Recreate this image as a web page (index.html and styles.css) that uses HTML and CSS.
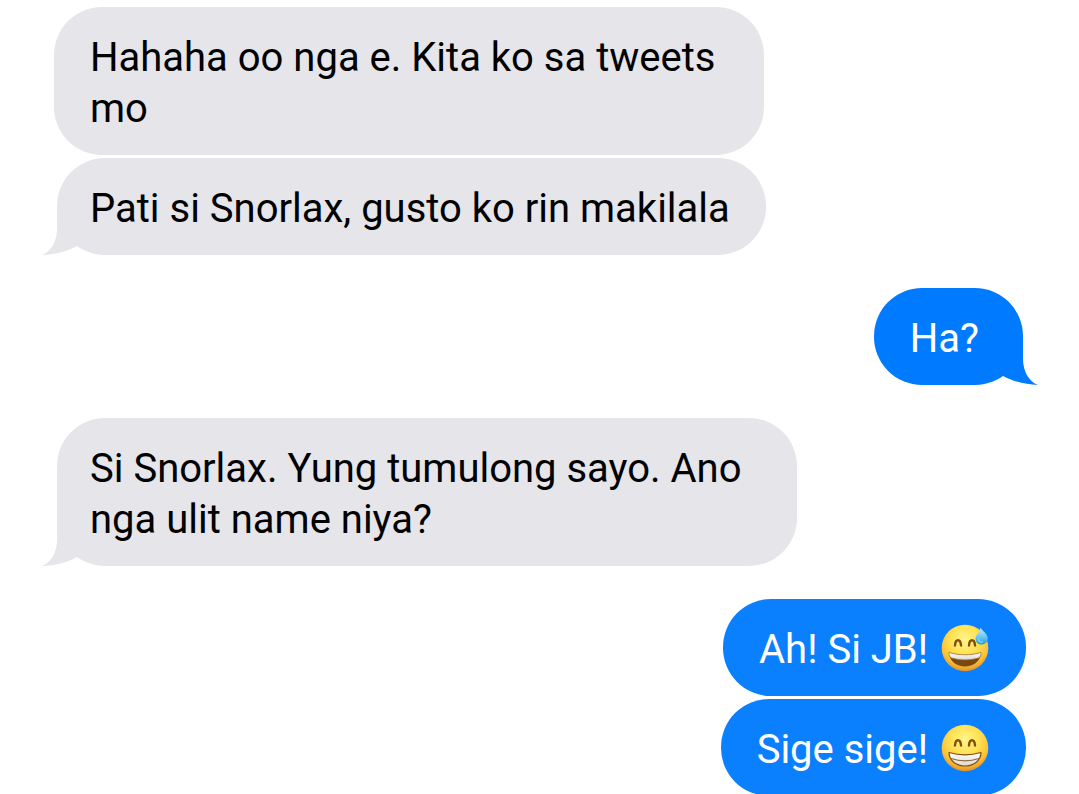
FILE: index.html
```
<!DOCTYPE html>
<html lang="tl">
<head>
    <meta charset="UTF-8">
    <meta name="viewport" content="width=device-width, initial-scale=1">
    <title>Messages</title>
    <link rel="stylesheet" href="styles.css">
</head>
<body>
    <main class="chat">
        <section class="group received">
            <p class="bubble multiline">Hahaha oo nga e. Kita ko sa tweets<br>mo</p>
            <p class="bubble tailed">Pati si Snorlax, gusto ko rin makilala
                <svg class="tail" viewBox="0 0 36 48" aria-hidden="true"><path d="M15 0V22C15 34 9 45 0 48C12 47.500 25 44.500 35 39L36 0Z"/></svg>
            </p>
        </section>

        <section class="group sent">
            <p class="bubble tailed">Ha?
                <svg class="tail" viewBox="0 0 36 48" aria-hidden="true"><path d="M15 0V22C15 34 9 45 0 48C12 47.500 25 44.500 35 39L36 0Z"/></svg>
            </p>
        </section>

        <section class="group received">
            <p class="bubble tailed multiline">Si Snorlax. Yung tumulong sayo. Ano<br>nga ulit name niya?
                <svg class="tail" viewBox="0 0 36 48" aria-hidden="true"><path d="M15 0V22C15 34 9 45 0 48C12 47.500 25 44.500 35 39L36 0Z"/></svg>
            </p>
        </section>

        <section class="group sent recent">
            <p class="bubble">Ah! Si JB!
                <svg class="emoji" viewBox="0 0 48 48" role="img" aria-label="Grinning face with sweat">
                    <defs>
                        <radialGradient id="face" cx="50%" cy="32%" r="68%">
                            <stop offset="0" stop-color="#fff58c"/>
                            <stop offset="0.45" stop-color="#ffe253"/>
                            <stop offset="0.8" stop-color="#fbbf34"/>
                            <stop offset="1" stop-color="#e0902a"/>
                        </radialGradient>
                        <linearGradient id="teeth" x1="0" y1="0" x2="0" y2="1">
                            <stop offset="0" stop-color="#ffffff"/>
                            <stop offset="1" stop-color="#ddd8cf"/>
                        </linearGradient>
                        <linearGradient id="drop" x1="0" y1="0" x2="0" y2="1">
                            <stop offset="0" stop-color="#c5efff"/>
                            <stop offset="0.6" stop-color="#62c3ef"/>
                            <stop offset="1" stop-color="#2695d6"/>
                        </linearGradient>
                    </defs>
                    <circle cx="24" cy="24" r="23.300" fill="url(#face)"/>
                    <path d="M14 21.500C14.500 14.500 19.500 14.500 20 21.500M28 21.500C28.500 14.500 33.500 14.500 34 21.500" fill="none" stroke="#81500f" stroke-width="2.400" stroke-linecap="round"/>
                    <path d="M8 29C18 31.500 30 31.500 40 29C39.500 37.500 32 42.500 24 42.500S8.500 37.500 8 29Z" fill="#7b4710"/>
                    <path d="M8 28.500C18 31.500 30 31.500 40 28.500C40.500 31 39 33.500 37.500 34C29 36.500 19 36.500 10.500 34C9 33.500 7.500 31 8 28.500Z" fill="url(#teeth)" stroke="#9b6826" stroke-width="0.700"/>
                    <path d="M39.500 3.500C39 9 34 10.500 34.500 15.500C35 19.500 38 21 41 20.500C45 20 47.500 17 46.500 13C45.500 9 41.500 7 39.500 3.500Z" fill="url(#drop)"/>
                    <path d="M37.500 15C37.500 17.500 39.500 18.500 41.500 18" fill="none" stroke="#8fdcff" stroke-width="1.200" stroke-linecap="round"/>
                </svg>
            </p>
            <p class="bubble">Sige sige!
                <svg class="emoji" viewBox="0 0 48 48" role="img" aria-label="Beaming face with smiling eyes">
                    <circle cx="24" cy="24" r="23.300" fill="url(#face)"/>
                    <path d="M14 21.500C14.500 14.500 19.500 14.500 20 21.500M28 21.500C28.500 14.500 33.500 14.500 34 21.500" fill="none" stroke="#81500f" stroke-width="2.400" stroke-linecap="round"/>
                    <path d="M8 28.500C18 31.500 30 31.500 40 28.500C40 37 32 42 24 42S8 37 8 28.500Z" fill="url(#teeth)" stroke="#81500f" stroke-width="1.200" stroke-linejoin="round"/>
                    <path d="M10 34.500C19 37.500 29 37.500 38 34.500" fill="none" stroke="#8c6844" stroke-width="1.100"/>
                </svg>
            </p>
        </section>
    </main>
</body>
</html>
```
FILE: styles.css
```
* {
    box-sizing: border-box;
}

body {
    margin: 0;
    background: #fff;
    color: #000;
    font-family: Roboto, "Liberation Sans", sans-serif;
    font-size: 40px;
    line-height: 51px;
    overflow: hidden;
}

.chat {
    display: flex;
    flex-direction: column;
    gap: 33px;
    padding: 7px 53px 0 54px;
}

.group {
    display: flex;
    flex-direction: column;
    gap: 3px;
}

.received {
    --bubble: #e5e5ea;
    align-items: flex-start;
}

.sent {
    --bubble: #007aff;
    align-items: flex-end;
    color: #fff;
}

.recent {
    --bubble: #0b80ff;
}

.bubble {
    position: relative;
    margin: 0;
    padding: 25px 36px 21px;
    border-radius: 48px;
    background: var(--bubble);
}

.received .tailed {
    margin-left: 3px;
    padding-left: 33px;
}

.sent .tailed {
    margin-right: 3px;
    padding-right: 44px;
}

.received .multiline {
    padding-right: 49px;
}

.received .tailed.multiline {
    padding-right: 56px;
}

/* Sits over the outer bottom corner of the bubble */
.tail {
    position: absolute;
    bottom: 0;
    left: -15px;
    width: 36px;
    height: 48px;
    fill: var(--bubble);
}

.sent .tail {
    right: -15px;
    left: auto;
    transform: scaleX(-1);
}

.emoji {
    display: inline-block;
    width: 48px;
    height: 48px;
    margin: 0 1px 0 3px;
    vertical-align: top;
}
```
